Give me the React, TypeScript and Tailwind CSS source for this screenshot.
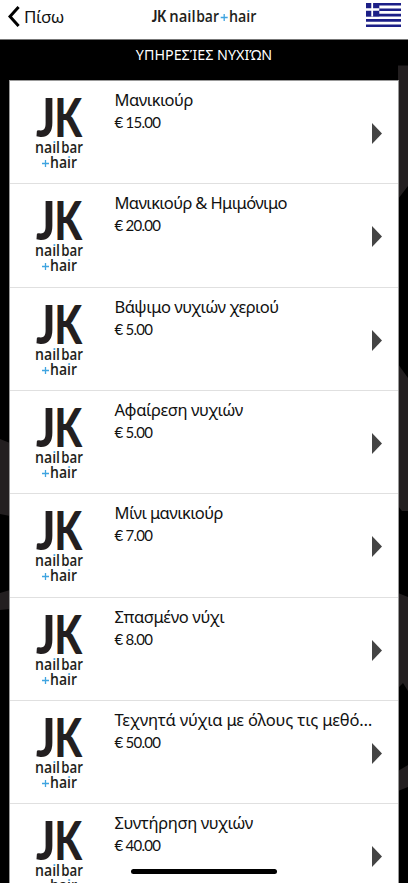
interface Service {
    id: number;
    name: string;
    price: string;
    tracking: string;
}

const services: Service[] = [
    { id: 1, name: 'Μανικιούρ', price: '€ 15.00', tracking: 'tracking-[-0.5px]' },
    { id: 2, name: 'Μανικιούρ & Ημιμόνιμο', price: '€ 20.00', tracking: 'tracking-[-0.63px]' },
    { id: 3, name: 'Βάψιμο νυχιών χεριού', price: '€ 5.00', tracking: 'tracking-[-0.49px]' },
    { id: 4, name: 'Αφαίρεση νυχιών', price: '€ 5.00', tracking: 'tracking-[-0.42px]' },
    { id: 5, name: 'Μίνι μανικιούρ', price: '€ 7.00', tracking: 'tracking-[-0.58px]' },
    { id: 6, name: 'Σπασμένο νύχι', price: '€ 8.00', tracking: 'tracking-[-0.32px]' },
    { id: 7, name: 'Τεχνητά νύχια με όλους τις μεθό…', price: '€ 50.00', tracking: 'tracking-[-0.15px]' },
    { id: 8, name: 'Συντήρηση νυχιών', price: '€ 40.00', tracking: 'tracking-[-0.38px]' },
];

// Gradient with a hard stop, so that only the dot of an "i" is blue
function DotFill({ id, y }: { id: string; y: number }) {
    return (
        <linearGradient id={id} gradientUnits="userSpaceOnUse" x1="0" x2="0" y1={y} y2={y + 0.1}>
            <stop offset="0" stopColor="#3fa4e0" />
            <stop offset="1" stopColor="#231f20" />
        </linearGradient>
    );
}

function Logo({ id }: { id: number }) {
    return (
        <svg width="48" height="80" viewBox="0 0 48 80" className="overflow-visible font-['Open_Sans',sans-serif]" fill="#231f20">
            <DotFill id={`nail-${id}`} y={47.4} />
            <DotFill id={`hair-${id}`} y={62.4} />
            <g className="font-['Lato',sans-serif]" fontSize="53.5" fontWeight="900">
                <text x="0" y="41.2" textLength="19.5" lengthAdjust="spacingAndGlyphs">J</text>
                <text x="18.5" y="41.2" textLength="27.5" lengthAdjust="spacingAndGlyphs">K</text>
            </g>
            <g fontSize="16" fontWeight="600">
                <text x="-1" y="57" textLength="25" lengthAdjust="spacingAndGlyphs">
                    na<tspan fill={`url(#nail-${id})`}>i</tspan>l
                </text>
                <text x="25.2" y="57" textLength="21.7" lengthAdjust="spacingAndGlyphs">bar</text>
                <text x="14" y="72" textLength="27" lengthAdjust="spacingAndGlyphs">
                    ha<tspan fill={`url(#hair-${id})`}>i</tspan>r
                </text>
            </g>
            <path d="M6 67.5h7M9.5 64v7" stroke="#3fa4e0" strokeWidth="1.3" />
        </svg>
    );
}

function HeaderLogo() {
    return (
        <svg width="106" height="24" viewBox="0 0 106 24" className="overflow-visible font-['Open_Sans',sans-serif]" fill="#231f20">
            <DotFill id="header-dot" y={5.7} />
            <g className="font-['Lato',sans-serif]" fontSize="16.7" fontWeight="900">
                <text x="0.8" y="15.3" textLength="14.5" lengthAdjust="spacingAndGlyphs">JK</text>
            </g>
            <g fontSize="16" fontWeight="600">
                <text x="18.3" y="15.3" textLength="26.3" lengthAdjust="spacingAndGlyphs">
                    na<tspan fill="url(#header-dot)">i</tspan>l
                </text>
                <text x="45.2" y="15.3" textLength="22.8" lengthAdjust="spacingAndGlyphs">bar</text>
                <text x="78" y="15.3" textLength="27.5" lengthAdjust="spacingAndGlyphs">
                    ha<tspan fill="url(#header-dot)">i</tspan>r
                </text>
            </g>
            <path d="M69.7 10.5h7M73.2 7v7" stroke="#3fa4e0" strokeWidth="1.3" />
        </svg>
    );
}

function GreekFlag() {
    return (
        <svg width="35" height="24" viewBox="0 0 35 24">
            <path fill="#fff" d="M0 0h35v24H0z" />
            <path fill="#1c1f87" d="M0 0h35v2.5H0zM0 5.4h35v2.7H0zM0 10.7h35v2.7H0zM0 16h35v2.7H0zM0 21.4h35V24H0z" />
            <path fill="#1c1f87" d="M0 0h13.3v13.4H0z" />
            <path fill="#fff" d="M5.3 0H7.1v13.4H5.3zM0 5.2h13.3v2.6H0z" />
        </svg>
    );
}

// Faint brand shapes showing at both sides of the list
function Backdrop() {
    return (
        <svg className="absolute inset-0" width="408" height="883" viewBox="0 0 408 883" fill="#231f20">
            <path d="M398 65.5h10V186l-10 13z" />
            <path d="M398 364l10 14v133h-6l-4-5z" />
            <path d="M398 593l10 4v94l-5-8-5 5z" />
            <path d="M398 771l10-6v22l-10 4z" />
            <path d="M0 439l10 4v73l-10-2z" />
            <path d="M0 593l10-3v19l-10 1z" />
        </svg>
    );
}

export default function App() {
    return (
        <div className="relative h-[883px] w-[408px] overflow-hidden bg-black font-['Noto_Sans',sans-serif] text-[#111]">
            <Backdrop />
            <header className="relative flex h-10 items-start justify-between border-b border-[#777] bg-white">
                <button className="flex w-[151px] items-start pl-2">
                    <svg className="mt-1.5" width="12" height="21" viewBox="0 0 12 21" fill="none" stroke="#000" strokeWidth="3">
                        <path d="M10.6 1L2 10.5l8.6 9.5" />
                    </svg>
                    <span className="ml-1 mt-[5px] text-[17px] leading-6 tracking-[-0.4px]">Πίσω</span>
                </button>
                <div className="mt-[7px] flex-1">
                    <HeaderLogo />
                </div>
                <div className="mr-[7px] mt-[3px]">
                    <GreekFlag />
                </div>
            </header>
            <h1 className="relative h-10 pt-[5px] text-center text-[14.3px] leading-5 text-white">ΥΠΗΡΕΣΊΕΣ ΝΥΧΙΏΝ</h1>
            <ul className="relative ml-[9px] w-[390px] border border-[#999] bg-white">
                {services.map((service) => (
                    <li key={service.id} className="flex h-[103.33px] border-b border-[#e0e0e0] pl-[26px] pr-4">
                        <div className="mt-[15px] w-[78.5px] shrink-0">
                            <Logo id={service.id} />
                        </div>
                        <div className="min-w-0 flex-1 pt-[7px]">
                            <h2 className={`whitespace-nowrap text-[16.5px] leading-6 ${service.tracking}`}>{service.name}</h2>
                            <p className="font-['Lato',sans-serif] text-[15px] leading-[21px] tracking-[-0.75px]">{service.price}</p>
                        </div>
                        <svg className="mt-[42px] shrink-0" width="10" height="21" viewBox="0 0 10 21">
                            <path fill="#444" d="M0 0l10 10.5L0 21z" />
                        </svg>
                    </li>
                ))}
            </ul>
            <div className="absolute bottom-[9px] left-[131px] h-[5px] w-[146px] rounded-full bg-black" />
        </div>
    );
}
